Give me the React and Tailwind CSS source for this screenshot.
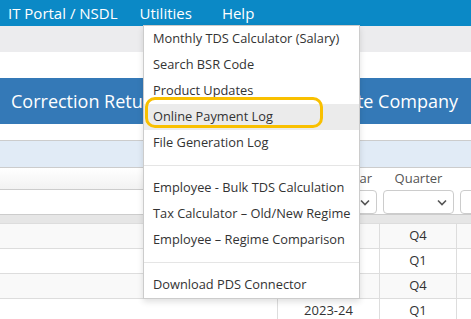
import React from "react";

const items1 = [
  "Monthly TDS Calculator (Salary)",
  "Search BSR Code",
  "Product Updates",
  "Online Payment Log",
  "File Generation Log",
];
const items2 = [
  "Employee - Bulk TDS Calculation",
  "Tax Calculator – Old/New Regime",
  "Employee – Regime Comparison",
];

function Item({ label, active }) {
  return (
    <div
      className={
        "h-[26px] flex items-center px-[9px] text-[12.8px] text-[#333] whitespace-nowrap " +
        (active ? "bg-[#ebebeb]" : "")
      }
    >
      {label}
    </div>
  );
}

function Divider() {
  return (
    <div className="h-[19px] flex items-center">
      <div className="h-px w-full bg-[#e5e5e5]" />
    </div>
  );
}

function Select({ className }) {
  return (
    <div
      className={
        "h-[24px] shrink-0 bg-white border border-[#ccc] rounded-[4px] flex items-center justify-end pr-[6px] " +
        className
      }
    >
      <svg width="10" height="7" viewBox="0 0 10 7">
        <path d="M1 1.5 L5 5.5 L9 1.5" fill="none" stroke="#555" strokeWidth="1.6" />
      </svg>
    </div>
  );
}

function Row({ shaded, year, q }) {
  return (
    <div className={"h-[25px] flex border-t border-[#ddd] text-[13px] text-[#333] " + (shaded ? "bg-[#f9f9f9]" : "bg-white")}>
      <div className="w-[278px] shrink-0 border-r border-[#ddd]" />
      <div className="w-[102px] shrink-0 border-r border-[#ddd] flex items-center justify-center">{year}</div>
      <div className="w-[77px] shrink-0 border-r border-[#ddd] flex items-center justify-center">{q}</div>
      <div className="flex-1" />
    </div>
  );
}

export default function App() {
  return (
    <div className="relative w-[471px] h-[319px] overflow-hidden bg-white font-['Open_Sans',sans-serif]">
      <nav className="h-[26px] bg-[#0b89c6] flex items-center text-white text-[15px]">
        <span className="ml-[8px]">IT Portal / NSDL</span>
        <span className="ml-[22px]">Utilities</span>
        <span className="ml-[30px]">Help</span>
      </nav>
      <div className="h-[26px] bg-[#ececee]" />
      <div className="h-[26px] bg-white" />
      <div className="h-[46px] bg-[#3479b7] flex items-center justify-between pl-[11px] pr-[13px] text-white text-[18px]">
        <span>Correction Return</span>
        <span>Private Company</span>
      </div>
      <div className="h-[17px] bg-white border-b border-[#ccc]" />
      <div className="h-[27px] bg-[#e1ebf6] border-b border-[#ccc]" />
      <div className="h-[22px] flex text-[13px] text-[#555]">
        <div className="w-[278px] shrink-0 bg-gradient-to-b from-white to-[#f2f2f2] border-b border-[#ccc]" />
        <div className="w-[102px] shrink-0 flex items-center justify-end pr-[8px]">Year</div>
        <div className="w-[77px] shrink-0 flex items-center justify-center">Quarter</div>
        <div className="flex-1" />
      </div>
      <div className="h-[24px] flex">
        <div className="w-[278px] shrink-0 bg-white" />
        <div className="w-[102px] shrink-0 flex justify-end pr-[3px]">
          <Select className="w-[90px]" />
        </div>
        <div className="w-[77px] shrink-0 flex px-[3px]">
          <Select className="w-[71px]" />
        </div>
        <div className="flex-1 min-w-0 pl-[3px] overflow-hidden">
          <Select className="w-[60px]" />
        </div>
      </div>
      <div className="h-[9px] bg-[#e6e6e6] border-t border-[#ccc]" />
      <Row shaded year="" q="Q4" />
      <Row year="" q="Q1" />
      <Row shaded year="" q="Q4" />
      <Row year="2023-24" q="Q1" />

      <div className="absolute left-[143px] top-[25px] w-[217px] bg-white border border-[#ccc] shadow-[0_3px_6px_rgba(0,0,0,0.12)]">
        {items1.map((t) => (
          <Item key={t} label={t} active={t === "Online Payment Log"} />
        ))}
        <Divider />
        {items2.map((t) => (
          <Item key={t} label={t} />
        ))}
        <Divider />
        <Item label="Download PDS Connector" />
      </div>
      <div className="absolute left-[145px] top-[97px] w-[178px] h-[31px] border-[3px] border-[#f9c000] rounded-[10px]" />
    </div>
  );
}
